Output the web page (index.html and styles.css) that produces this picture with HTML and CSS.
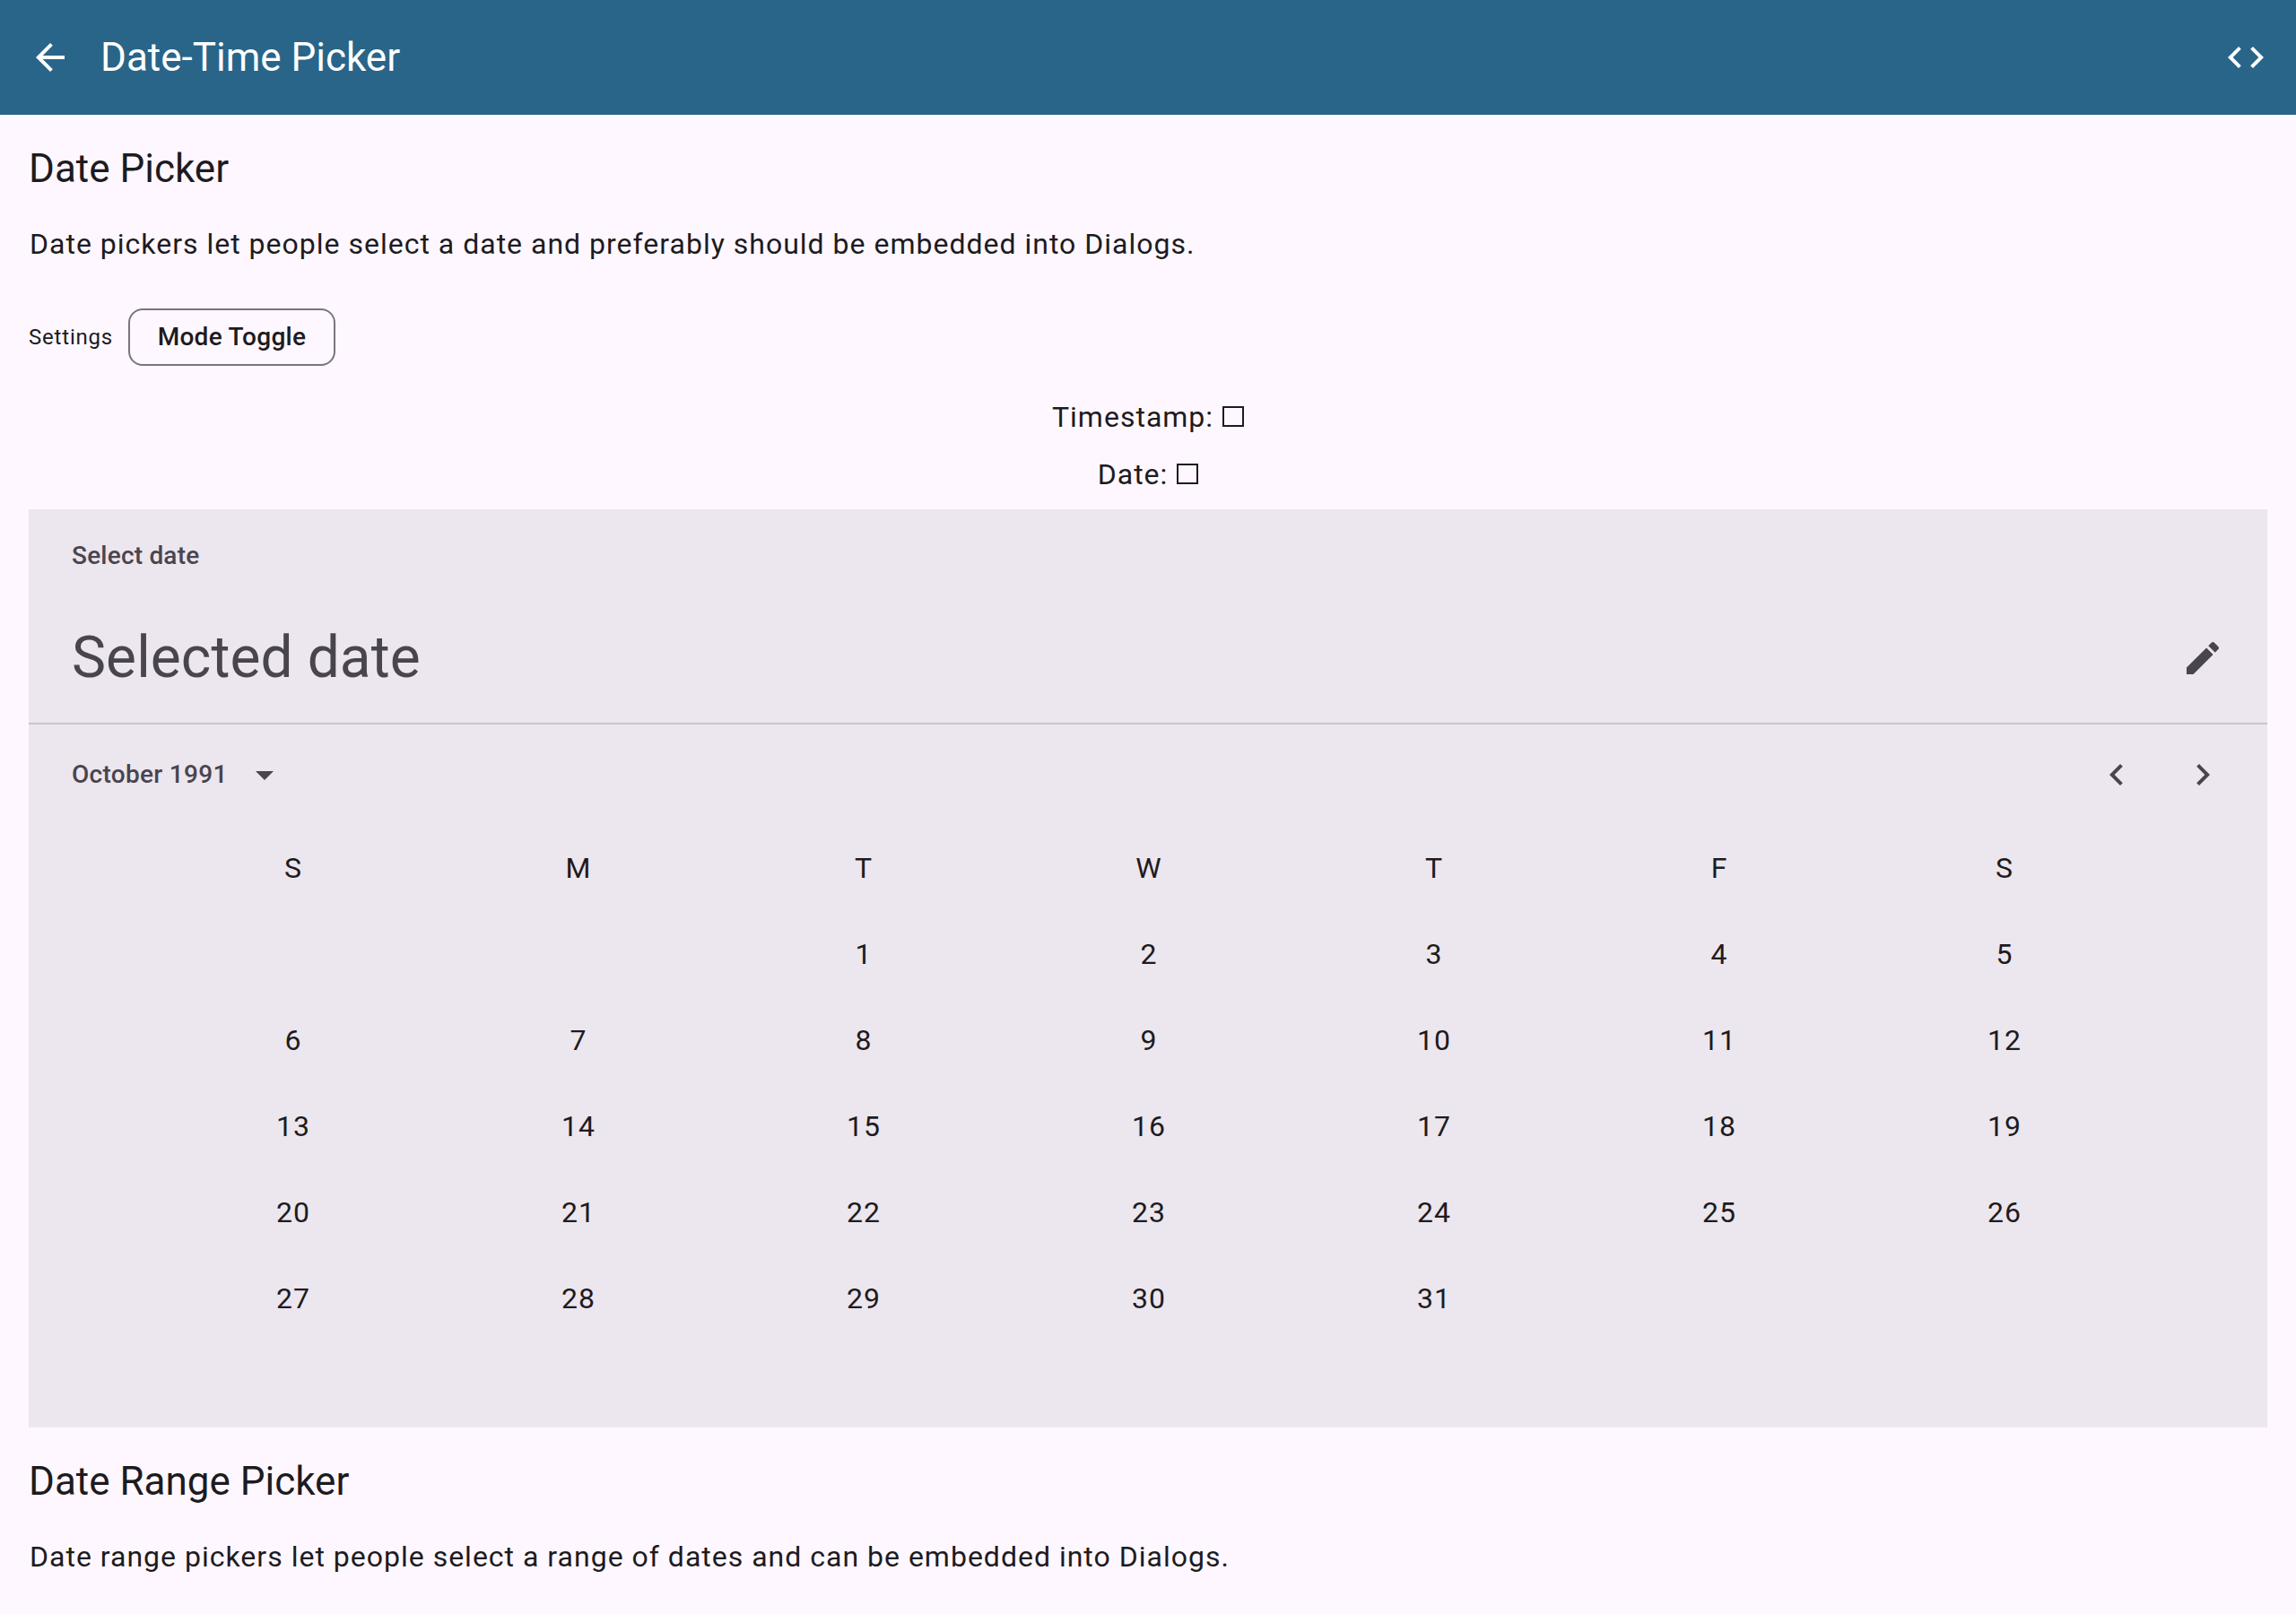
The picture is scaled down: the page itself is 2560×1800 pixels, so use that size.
FILE: index.html
```html
<!DOCTYPE html>
<html lang="en">
<head>
<meta charset="utf-8">
<title>Date-Time Picker</title>
<link rel="stylesheet" href="styles.css">
</head>
<body>
<header class="app-bar">
  <svg class="icon" viewBox="0 0 24 24"><path d="M20 11H7.83l5.59-5.59L12 4l-8 8 8 8 1.41-1.41L7.83 13H20v-2z"/></svg>
  <h1 class="app-title">Date-Time Picker</h1>
  <svg class="icon" viewBox="0 0 24 24"><path d="M9.4 16.6 4.8 12l4.6-4.6L8 6l-6 6 6 6 1.4-1.4zm5.2 0 4.6-4.6-4.6-4.6L16 6l6 6-6 6-1.4-1.4z"/></svg>
</header>
<main class="content">
  <h2 class="section-title">Date Picker</h2>
  <p class="body-text">Date pickers let people select a date and preferably should be embedded into Dialogs.</p>
  <div class="settings">
    <span class="settings-label">Settings</span>
    <button class="chip">Mode Toggle</button>
  </div>
  <div class="values">
    <p class="value">Timestamp: <span class="empty-box"></span></p>
    <p class="value">Date: <span class="empty-box"></span></p>
  </div>
  <section class="picker">
    <div class="picker-header">
      <p class="label">Select date</p>
      <div class="headline-row">
        <p class="headline">Selected date</p>
        <svg class="icon" viewBox="0 0 24 24"><path d="M3 17.25V21h3.75L17.81 9.94l-3.75-3.75L3 17.25zM20.71 7.04c.39-.39.39-1.02 0-1.41l-2.34-2.34c-.39-.39-1.02-.39-1.41 0l-1.83 1.83 3.75 3.75 1.83-1.83z"/></svg>
      </div>
    </div>
    <div class="month-row">
      <p class="label month-label">October 1991</p>
      <svg class="icon" viewBox="0 0 24 24"><path d="M7 10l5 5 5-5z"/></svg>
      <div class="month-nav">
        <svg class="icon" viewBox="0 0 24 24"><path d="M15.41 7.41 14 6l-6 6 6 6 1.41-1.41L10.83 12z"/></svg>
        <svg class="icon" viewBox="0 0 24 24"><path d="M10 6 8.59 7.41 13.17 12l-4.58 4.59L10 18l6-6z"/></svg>
      </div>
    </div>
    <div class="calendar">
      <div class="week"><span>S</span><span>M</span><span>T</span><span>W</span><span>T</span><span>F</span><span>S</span></div>
      <div class="week"><span></span><span></span><span>1</span><span>2</span><span>3</span><span>4</span><span>5</span></div>
      <div class="week"><span>6</span><span>7</span><span>8</span><span>9</span><span>10</span><span>11</span><span>12</span></div>
      <div class="week"><span>13</span><span>14</span><span>15</span><span>16</span><span>17</span><span>18</span><span>19</span></div>
      <div class="week"><span>20</span><span>21</span><span>22</span><span>23</span><span>24</span><span>25</span><span>26</span></div>
      <div class="week"><span>27</span><span>28</span><span>29</span><span>30</span><span>31</span><span></span><span></span></div>
    </div>
  </section>
  <h2 class="section-title range-title">Date Range Picker</h2>
  <p class="body-text">Date range pickers let people select a range of dates and can be embedded into Dialogs.</p>
</main>
</body>
</html>
```
FILE: styles.css
```css
* { box-sizing: border-box; }
body, h1, h2, p { margin: 0; }
body {
  height: 1800px;
  overflow: hidden;
  background: #fef7ff;
  color: #1d1b20;
  font: 400 32px/48px Roboto, sans-serif;
  letter-spacing: 1px;
}
.icon { display: block; width: 48px; height: 48px; fill: currentColor; flex: none; }
.app-bar {
  display: flex;
  align-items: center;
  height: 128px;
  padding: 0 32px;
  background: #296589;
  color: #fff;
}
.app-title {
  flex: 1;
  padding-left: 32px;
  font-size: 44px;
  line-height: 56px;
  font-weight: 400;
  letter-spacing: 0;
}
.content { padding: 32px; }
.section-title { font-size: 44px; line-height: 56px; font-weight: 400; letter-spacing: 0; }
.body-text { margin-top: 32px; padding-left: 1px; }
.settings { display: flex; align-items: center; height: 64px; margin-top: 48px; }
.settings-label { width: 111px; font-size: 24px; line-height: 32px; letter-spacing: 0.8px; }
.chip {
  width: 231px;
  height: 64px;
  padding: 0;
  border: 2px solid #79747e;
  border-radius: 16px;
  background: transparent;
  color: inherit;
  font: 500 28px/40px Roboto, sans-serif;
  letter-spacing: 0.3px;
}
.values { margin-top: 24px; padding: 9px 0 7px 1px; text-align: center; }
.value { height: 64px; line-height: 48px; }
.value + .value { height: 56px; }
.empty-box {
  display: inline-block;
  width: 24px;
  height: 23px;
  margin: 0 1px;
  border: 2px solid #1d1b20;
}
.picker { height: 1024px; background: #ece6ee; }
.picker-header { height: 240px; padding: 32px 48px 0; border-bottom: 2px solid #cac4d0; color: #49454f; }
.label { font-size: 28px; line-height: 40px; font-weight: 500; letter-spacing: 0.2px; }
.headline-row { display: flex; align-items: center; justify-content: space-between; height: 80px; margin-top: 54px; }
.headline { font-size: 64px; line-height: 80px; letter-spacing: 0.1px; }
.month-row { display: flex; align-items: center; height: 112px; padding: 0 48px; color: #49454f; }
.month-label { margin-right: 17px; letter-spacing: 0.3px; }
.month-nav { display: flex; gap: 48px; margin-left: auto; }
.calendar { padding: 0 24px; }
.week { display: flex; justify-content: space-evenly; height: 96px; line-height: 96px; text-align: center; }
.week span { width: 96px; padding-left: 2px; }
.range-title { margin-top: 32px; }
```
